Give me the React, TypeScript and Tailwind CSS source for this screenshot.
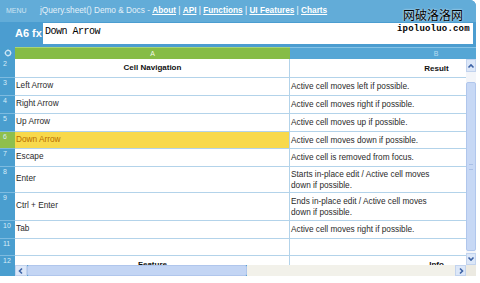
import React from 'react';

type Row = {
  n: number;
  h: string;
  a?: string;
  b?: React.ReactNode;
  head?: boolean;
  active?: boolean;
};

const rows: Row[] = [
  { n: 2, h: 'h-[19px]', a: 'Cell Navigation', b: 'Result', head: true },
  { n: 3, h: 'h-[18px]', a: 'Left Arrow', b: 'Active cell moves left if possible.' },
  { n: 4, h: 'h-[18px]', a: 'Right Arrow', b: 'Active cell moves right if possible.' },
  { n: 5, h: 'h-[18px]', a: 'Up Arrow', b: 'Active cell moves up if possible.' },
  { n: 6, h: 'h-[17px]', a: 'Down Arrow', b: 'Active cell moves down if possible.', active: true },
  { n: 7, h: 'h-[18px]', a: 'Escape', b: 'Active cell is removed from focus.' },
  {
    n: 8,
    h: 'h-[26px]',
    a: 'Enter',
    b: (
      <>
        Starts in-place edit / Active cell moves
        <br />
        down if possible.
      </>
    ),
  },
  {
    n: 9,
    h: 'h-[28px]',
    a: 'Ctrl + Enter',
    b: (
      <>
        Ends in-place edit / Active cell moves
        <br />
        down if possible.
      </>
    ),
  },
  { n: 10, h: 'h-[18px]', a: 'Tab', b: 'Active cell moves right if possible.' },
  { n: 11, h: 'h-[17px]' },
  { n: 12, h: 'h-[18px]', a: 'Feature', b: 'Info', head: true },
];

const links = ['About', 'API', 'Functions', 'UI Features', 'Charts'];

const Arrow = ({ dir }: { dir: 'up' | 'down' | 'left' | 'right' }) => {
  const d = {
    up: 'M1.5 5.5 L4 3 L6.5 5.5',
    down: 'M1.5 2.5 L4 5 L6.5 2.5',
    left: 'M5 1.5 L2.5 4 L5 6.5',
    right: 'M3 1.5 L5.5 4 L3 6.5',
  }[dir];
  return (
    <svg width="8" height="8" viewBox="0 0 8 8">
      <path d={d} fill="none" stroke="#3d63a6" strokeWidth="1.6" />
    </svg>
  );
};

const SheetRow = ({ row }: { row: Row }) => {
  const { n, h, a, b, head, active } = row;
  return (
    <div className={`flex shrink-0 ${h}`}>
      <div
        className={`w-[15px] shrink-0 border-b border-[#7dbbe0] pl-[3px] pt-[1px] text-[7px] leading-[8px] text-[#d6ecf8] ${
          active ? 'bg-[#8fbf4d]' : 'bg-[#4a9ecf]'
        }`}
      >
        {n}
      </div>
      <div
        className={`flex w-[275px] shrink-0 items-center border-b border-r border-[#b3d3ea] pl-[1px] ${
          head ? 'justify-center text-[8px] font-bold text-[#111]' : ''
        } ${active ? 'bg-[#f8d94b] text-[#b86e00]' : 'bg-white text-[#2a2a2a]'}`}
      >
        {a}
      </div>
      <div
        className={`flex w-[292px] shrink-0 items-center border-b border-[#b3d3ea] bg-white pl-[1px] leading-[11px] ${
          head ? 'justify-center text-[8px] font-bold text-[#111]' : 'text-[#2a2a2a]'
        }`}
      >
        <div>{b}</div>
      </div>
    </div>
  );
};

const App = () => {
  return (
    <div className="relative h-[283px] w-[480px] overflow-hidden bg-white font-['Liberation_Sans',Arial,sans-serif]">
      <div className="flex h-[276px] w-[476px] flex-col overflow-hidden rounded-tr-[6px] bg-[#4b9dd0]">
        {/* menu bar */}
        <div className="flex h-[22px] shrink-0 items-center whitespace-nowrap bg-[#62acd8] pl-[6px] text-[8.25px] text-[#e4f1f9]">
          <span className="w-[34px] text-[7px] text-[#cfe5f3]">MENU</span>
          <span>jQuery.sheet() Demo &amp; Docs -&nbsp;</span>
          {links.map((l, i) => (
            <span key={l}>
              {i > 0 && <span className="text-white">&nbsp;|&nbsp;</span>}
              <span className="font-bold text-white underline">{l}</span>
            </span>
          ))}
        </div>

        {/* formula bar */}
        <div className="flex h-[25px] shrink-0">
          <div className="w-[43px] shrink-0 whitespace-nowrap pl-[15px] pt-[4px] text-[11px] font-bold leading-[14px] text-white">
            A6 fx
          </div>
          <div className="mr-[3px] mt-[1px] h-[21px] flex-1 bg-white pl-[2px] pt-[3px] font-['Liberation_Mono',monospace] text-[10px] leading-[12px] tracking-[-0.5px] text-black">
            Down Arrow
          </div>
        </div>

        {/* column headers */}
        <div className="flex h-[12px] shrink-0 overflow-hidden text-[7px] leading-[12px] text-[#f2f8e8]">
          <div className="flex w-[15px] shrink-0 items-center justify-center bg-[#4a9ecf]">
            <svg width="8" height="8" viewBox="0 0 8 8">
              <circle cx="4" cy="4" r="2.6" fill="none" stroke="#cde6f5" strokeWidth="1.2" />
              <path d="M4 0.5 V2 M4 6 V7.5 M0.5 4 H2 M6 4 H7.5" stroke="#cde6f5" strokeWidth="1" />
            </svg>
          </div>
          <div className="w-[275px] shrink-0 border-t border-[#a8d476] bg-[#86bc46] text-center">A</div>
          <div className="w-[292px] shrink-0 border-t border-[#86c3e6] bg-[#55a6d5] text-center text-[#b8ddf2]">B</div>
        </div>

        {/* grid body */}
        <div className="flex h-[206px] shrink-0 text-[8.25px]">
          <div className="flex w-[466px] shrink-0 flex-col overflow-hidden">
            {rows.map((r) => (
              <SheetRow key={r.n} row={r} />
            ))}
          </div>
          <div className="flex w-[10px] shrink-0 flex-col bg-[#f3f5f9]">
            <div className="flex h-[13px] items-center justify-center border border-[#c2d3ee] bg-[#dce7f8]">
              <Arrow dir="up" />
            </div>
            <div className="h-[10px]" />
            <div className="flex flex-1 items-center justify-center rounded-[2px] border border-[#b0c6ec] bg-[#c7d8f5]">
              <div className="h-[6px] w-[4px] border-y border-[#a9bfe6]" />
            </div>
            <div className="h-[2px]" />
            <div className="flex h-[12px] items-center justify-center border border-[#c2d3ee] bg-[#dce7f8]">
              <Arrow dir="down" />
            </div>
          </div>
        </div>

        {/* horizontal scrollbar */}
        <div className="flex h-[11px] shrink-0">
          <div className="w-[15px] shrink-0 bg-[#4a9ecf]" />
          <div className="flex w-[12px] shrink-0 items-center justify-center border border-[#c2d3ee] bg-[#dce7f8]">
            <Arrow dir="left" />
          </div>
          <div className="w-[220px] shrink-0 rounded-[2px] border border-[#b0c6ec] bg-[#c3d5f4]" />
          <div className="flex-1 bg-[#f2f1ea]" />
          <div className="flex w-[11px] shrink-0 items-center justify-center border border-[#c2d3ee] bg-[#dce7f8]">
            <Arrow dir="right" />
          </div>
          <div className="w-[10px] shrink-0 bg-[#eceae2]" />
        </div>
      </div>

      {/* watermark */}
      <div className="absolute left-[403px] top-[8px] font-['Noto_Sans_CJK_SC',sans-serif] text-[12px] leading-[14px] text-black [text-shadow:0_0_2px_#fff]">
        网破洛洛网
      </div>
      <div className="absolute left-[397px] top-[25px] font-['Liberation_Mono',monospace] text-[9px] font-bold leading-[9px] tracking-[0.2px] text-black">
        ipoluoluo.com
      </div>
    </div>
  );
};

export default App;
